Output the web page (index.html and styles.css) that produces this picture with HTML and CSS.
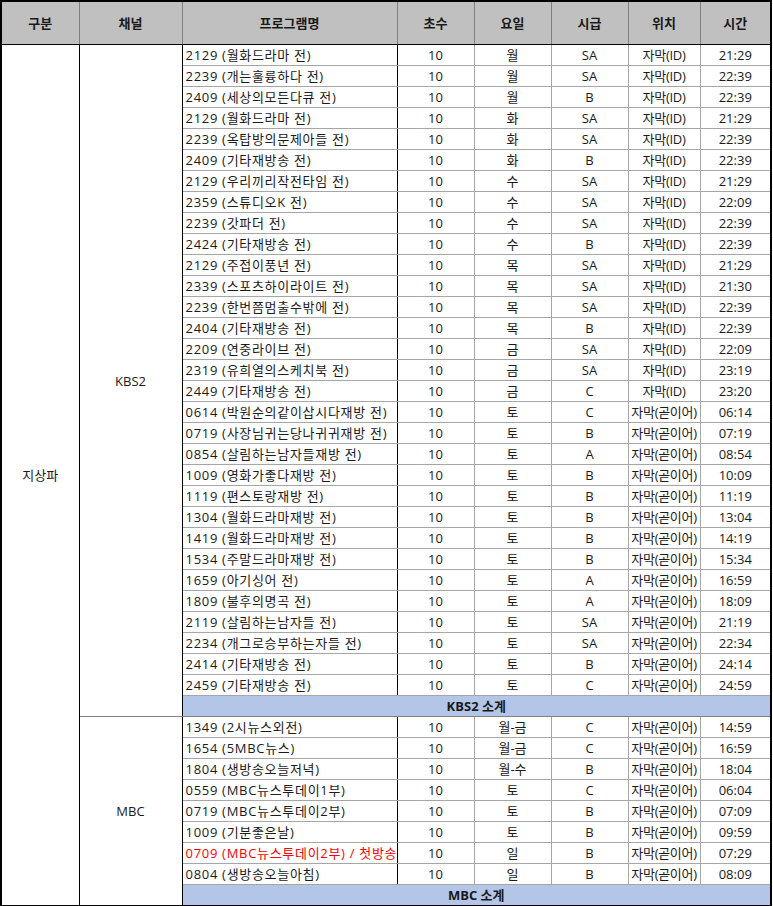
FILE: index.html
```html
<!DOCTYPE html>
<html lang="ko">
<head>
<meta charset="utf-8">
<link rel="stylesheet" href="styles.css">
</head>
<body>
<table class="sheet">
<colgroup>
<col class="c1"><col class="c2"><col class="c3"><col class="c4"><col class="c5"><col class="c6"><col class="c7"><col class="c8">
</colgroup>
<thead>
<tr class="head"><th>구분</th><th>채널</th><th>프로그램명</th><th>초수</th><th>요일</th><th>시급</th><th>위치</th><th>시간</th></tr>
</thead>
<tbody>
<tr><td class="grp" rowspan="41">지상파</td><td class="ch" rowspan="32">KBS2</td><td class="pg">2129 (월화드라마 전)</td><td>10</td><td>월</td><td>SA</td><td class="loc">자막(ID)</td><td class="tm">21:29</td></tr>
<tr><td class="pg">2239 (개는훌륭하다 전)</td><td>10</td><td>월</td><td>SA</td><td class="loc">자막(ID)</td><td class="tm">22:39</td></tr>
<tr class="bk"><td class="pg">2409 (세상의모든다큐 전)</td><td>10</td><td>월</td><td>B</td><td class="loc">자막(ID)</td><td class="tm">22:39</td></tr>
<tr><td class="pg">2129 (월화드라마 전)</td><td>10</td><td>화</td><td>SA</td><td class="loc">자막(ID)</td><td class="tm">21:29</td></tr>
<tr class="bk"><td class="pg">2239 (옥탑방의문제아들 전)</td><td>10</td><td>화</td><td>SA</td><td class="loc">자막(ID)</td><td class="tm">22:39</td></tr>
<tr><td class="pg">2409 (기타재방송 전)</td><td>10</td><td>화</td><td>B</td><td class="loc">자막(ID)</td><td class="tm">22:39</td></tr>
<tr><td class="pg">2129 (우리끼리작전타임 전)</td><td>10</td><td>수</td><td>SA</td><td class="loc">자막(ID)</td><td class="tm">21:29</td></tr>
<tr><td class="pg">2359 (스튜디오K 전)</td><td>10</td><td>수</td><td>SA</td><td class="loc">자막(ID)</td><td class="tm">22:09</td></tr>
<tr><td class="pg">2239 (갓파더 전)</td><td>10</td><td>수</td><td>SA</td><td class="loc">자막(ID)</td><td class="tm">22:39</td></tr>
<tr class="bk"><td class="pg">2424 (기타재방송 전)</td><td>10</td><td>수</td><td>B</td><td class="loc">자막(ID)</td><td class="tm">22:39</td></tr>
<tr><td class="pg">2129 (주접이풍년 전)</td><td>10</td><td>목</td><td>SA</td><td class="loc">자막(ID)</td><td class="tm">21:29</td></tr>
<tr><td class="pg">2339 (스포츠하이라이트 전)</td><td>10</td><td>목</td><td>SA</td><td class="loc">자막(ID)</td><td class="tm">21:30</td></tr>
<tr><td class="pg">2239 (한번쯤멈출수밖에 전)</td><td>10</td><td>목</td><td>SA</td><td class="loc">자막(ID)</td><td class="tm">22:39</td></tr>
<tr class="bk"><td class="pg">2404 (기타재방송 전)</td><td>10</td><td>목</td><td>B</td><td class="loc">자막(ID)</td><td class="tm">22:39</td></tr>
<tr><td class="pg">2209 (연중라이브 전)</td><td>10</td><td>금</td><td>SA</td><td class="loc">자막(ID)</td><td class="tm">22:09</td></tr>
<tr><td class="pg">2319 (유희열의스케치북 전)</td><td>10</td><td>금</td><td>SA</td><td class="loc">자막(ID)</td><td class="tm">23:19</td></tr>
<tr><td class="pg">2449 (기타재방송 전)</td><td>10</td><td>금</td><td>C</td><td class="loc">자막(ID)</td><td class="tm">23:20</td></tr>
<tr><td class="pg">0614 (박원순의같이삽시다재방 전)</td><td>10</td><td>토</td><td>C</td><td class="loc">자막(곧이어)</td><td class="tm">06:14</td></tr>
<tr class="bk"><td class="pg">0719 (사장님귀는당나귀귀재방 전)</td><td>10</td><td>토</td><td>B</td><td class="loc">자막(곧이어)</td><td class="tm">07:19</td></tr>
<tr><td class="pg">0854 (살림하는남자들재방 전)</td><td>10</td><td>토</td><td>A</td><td class="loc">자막(곧이어)</td><td class="tm">08:54</td></tr>
<tr><td class="pg">1009 (영화가좋다재방 전)</td><td>10</td><td>토</td><td>B</td><td class="loc">자막(곧이어)</td><td class="tm">10:09</td></tr>
<tr><td class="pg">1119 (편스토랑재방 전)</td><td>10</td><td>토</td><td>B</td><td class="loc">자막(곧이어)</td><td class="tm">11:19</td></tr>
<tr><td class="pg">1304 (월화드라마재방 전)</td><td>10</td><td>토</td><td>B</td><td class="loc">자막(곧이어)</td><td class="tm">13:04</td></tr>
<tr><td class="pg">1419 (월화드라마재방 전)</td><td>10</td><td>토</td><td>B</td><td class="loc">자막(곧이어)</td><td class="tm">14:19</td></tr>
<tr><td class="pg">1534 (주말드라마재방 전)</td><td>10</td><td>토</td><td>B</td><td class="loc">자막(곧이어)</td><td class="tm">15:34</td></tr>
<tr><td class="pg">1659 (아기싱어 전)</td><td>10</td><td>토</td><td>A</td><td class="loc">자막(곧이어)</td><td class="tm">16:59</td></tr>
<tr><td class="pg">1809 (불후의명곡 전)</td><td>10</td><td>토</td><td>A</td><td class="loc">자막(곧이어)</td><td class="tm">18:09</td></tr>
<tr><td class="pg">2119 (살림하는남자들 전)</td><td>10</td><td>토</td><td>SA</td><td class="loc">자막(곧이어)</td><td class="tm">21:19</td></tr>
<tr><td class="pg">2234 (개그로승부하는자들 전)</td><td>10</td><td>토</td><td>SA</td><td class="loc">자막(곧이어)</td><td class="tm">22:34</td></tr>
<tr><td class="pg">2414 (기타재방송 전)</td><td>10</td><td>토</td><td>B</td><td class="loc">자막(곧이어)</td><td class="tm">24:14</td></tr>
<tr><td class="pg">2459 (기타재방송 전)</td><td>10</td><td>토</td><td>C</td><td class="loc">자막(곧이어)</td><td class="tm">24:59</td></tr>
<tr class="sub"><td colspan="6">KBS2 소계</td></tr>
<tr class="bkall"><td class="ch" rowspan="9">MBC</td><td class="pg">1349 (2시뉴스외전)</td><td>10</td><td>월-금</td><td>C</td><td class="loc">자막(곧이어)</td><td class="tm">14:59</td></tr>
<tr><td class="pg">1654 (5MBC뉴스)</td><td>10</td><td>월-금</td><td>C</td><td class="loc">자막(곧이어)</td><td class="tm">16:59</td></tr>
<tr><td class="pg">1804 (생방송오늘저녁)</td><td>10</td><td>월-수</td><td>B</td><td class="loc">자막(곧이어)</td><td class="tm">18:04</td></tr>
<tr class="bk"><td class="pg">0559 (MBC뉴스투데이1부)</td><td>10</td><td>토</td><td>C</td><td class="loc">자막(곧이어)</td><td class="tm">06:04</td></tr>
<tr class="bk"><td class="pg">0719 (MBC뉴스투데이2부)</td><td>10</td><td>토</td><td>B</td><td class="loc">자막(곧이어)</td><td class="tm">07:09</td></tr>
<tr class="bk"><td class="pg">1009 (기분좋은날)</td><td>10</td><td>토</td><td>B</td><td class="loc">자막(곧이어)</td><td class="tm">09:59</td></tr>
<tr><td class="pg red">0709 (MBC뉴스투데이2부) / 첫방송</td><td>10</td><td>일</td><td>B</td><td class="loc">자막(곧이어)</td><td class="tm">07:29</td></tr>
<tr class="bk"><td class="pg">0804 (생방송오늘아침)</td><td>10</td><td>일</td><td>B</td><td class="loc">자막(곧이어)</td><td class="tm">08:09</td></tr>
<tr class="sub"><td colspan="6">MBC 소계</td></tr>
</tbody>
</table>
</body>
</html>
```

FILE: styles.css
```css
html, body {
  margin: 0;
  padding: 0;
  background: #ffffff;
}

.sheet {
  border-collapse: collapse;
  table-layout: fixed;
  width: 772px;
  font-family: "Open Sans", "Noto Sans CJK KR", sans-serif;
  font-size: 13px;
  color: #1a1a1a;
  border: 2px solid #000;
}

.c1 { width: 78px; }
.c2 { width: 103px; }
.c3 { width: 215px; }
.c4 { width: 77px; }
.c5 { width: 77px; }
.c6 { width: 77px; }
.c7 { width: 72px; }
.c8 { width: 71px; }

.sheet th,
.sheet td {
  padding: 0;
  text-align: center;
  vertical-align: middle;
  white-space: nowrap;
  overflow: visible;
  border: 1px solid #a6a6a6;
  line-height: 20px;
}

.head th {
  height: 42px;
  background: #c0c0c0;
  font-weight: bold;
  border-bottom: 1px solid #000;
  border-left: 1px solid #808080;
  border-right: 1px solid #808080;
}

.sheet tbody tr td {
  height: 20px;
}

.sheet td.grp {
  border-right: 1px solid #000;
}

.sheet td.ch {
  border-left: 1px solid #000;
  border-right: 1px solid #000;
  border-bottom: 1px solid #808080;
}

.sheet td.pg {
  text-align: left;
  padding-left: 3px;
  letter-spacing: 0.7px;
  border-left: 1px solid #000;
  border-right: 1px solid #000;
}

.sheet td.red {
  color: #ff0000;
}

.sheet td.loc {
  border-left: 1px solid #555;
  letter-spacing: -0.3px;
}

.sheet td.tm {
  border-left: 1px solid #555;
  border-right: 2px solid #000;
}

.bk td {
  border-top: 1px solid #000;
}

.bkall td {
  border-top: 1px solid #808080;
}

.sub td {
  background: #b4c6e7;
  font-weight: bold;
  border-top: 1px solid #808080;
  border-bottom: 1px solid #808080;
  border-left: 1px solid #000;
}
```
